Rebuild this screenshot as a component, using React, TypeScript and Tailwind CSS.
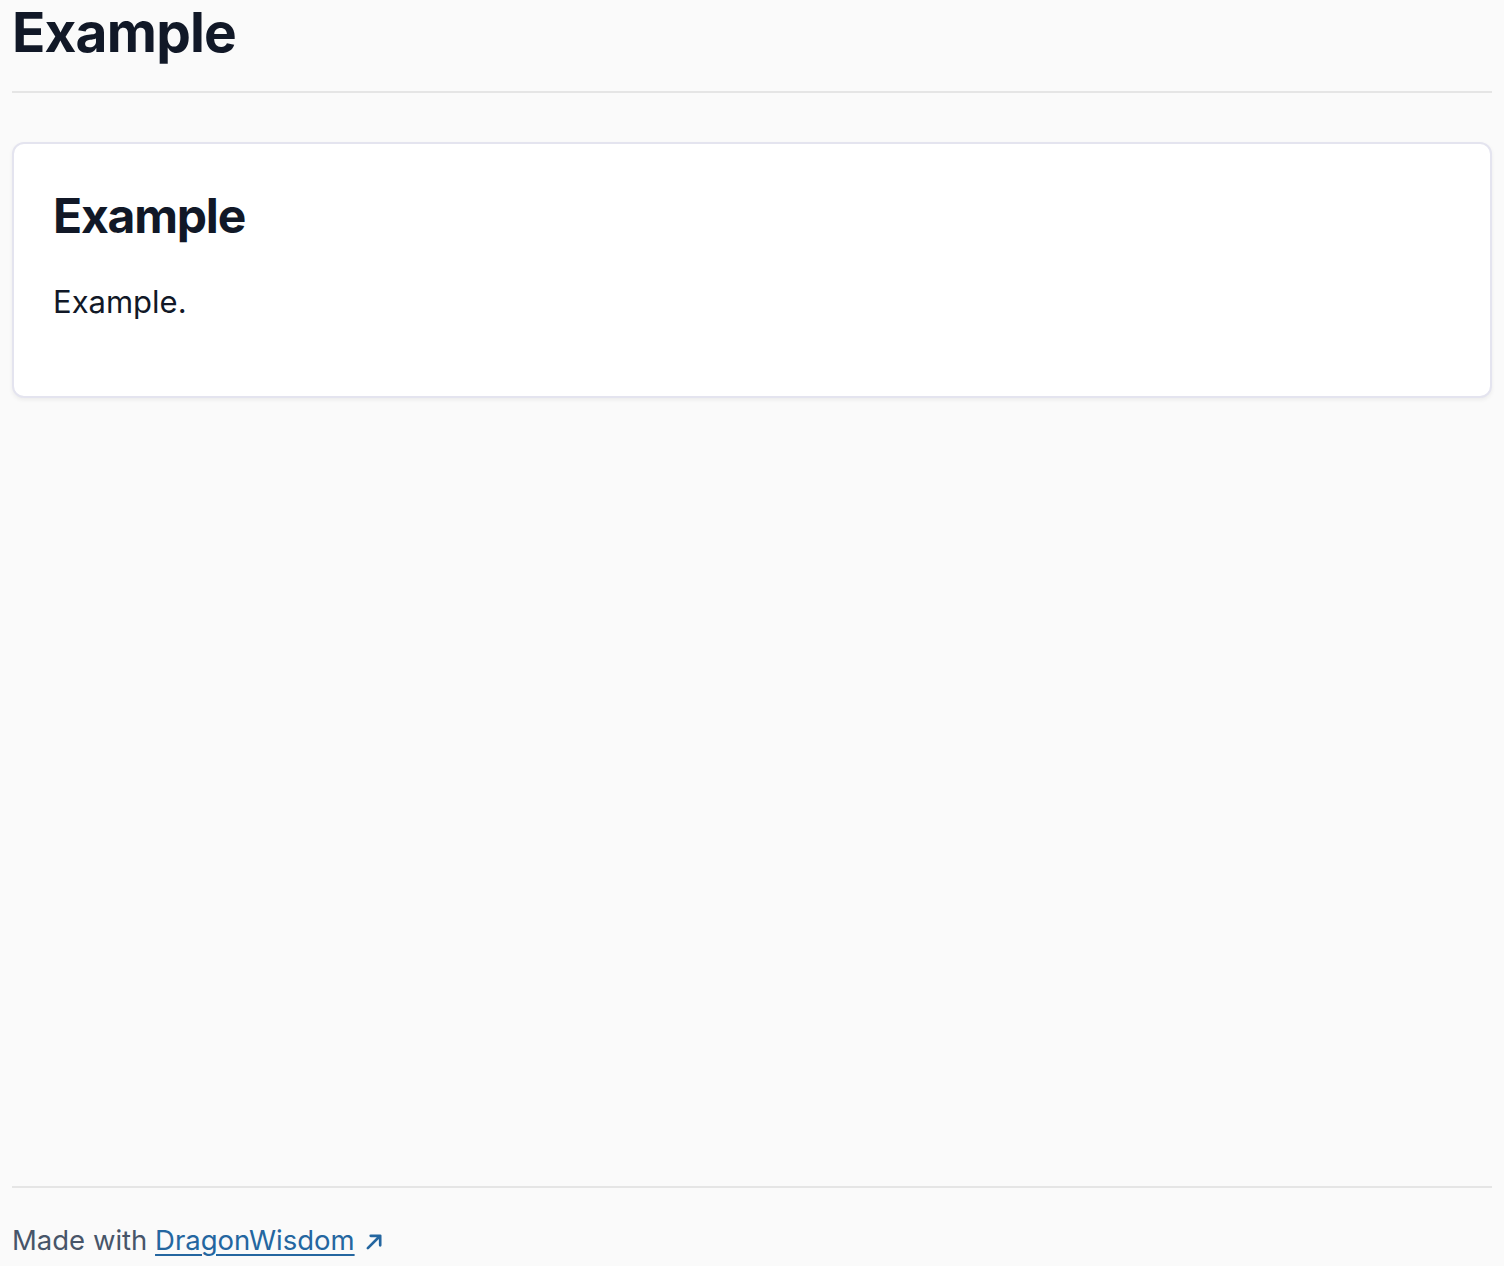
export default function App() {
  return (
    <div
      className="flex min-h-screen flex-col bg-[#fafafa] px-3 text-[#111827]"
      style={{ fontFamily: 'Inter, "Noto Sans", sans-serif' }}
    >
      <header className="border-b-2 border-[#e5e5e5] pb-[27px]">
        <h1 className="text-[55px] leading-[64px] font-bold tracking-[-0.8px]">Example</h1>
      </header>
      <main className="flex-1 pt-[49px]">
        <section className="rounded-xl border-2 border-[#e4e4ef] bg-white px-[39px] pt-[40px] pb-[73px] shadow-[0_2px_4px_rgba(0,0,0,0.06)]">
          <h2 className="text-[48px] leading-[64px] font-bold tracking-[-1.2px]">Example</h2>
          <p className="mt-[33px] text-[31px] leading-[42px]">Example.</p>
        </section>
      </main>
      <footer className="border-t-2 border-[#e5e5e5] pt-[32px] pb-[6px] text-[27.5px] leading-[40px] text-[#475569]">
        Made with{' '}
        <a href="#" className="text-[#2466a0] underline decoration-2 underline-offset-[4px]">
          DragonWisdom
        </a>
        <svg className="ml-[10px] inline-block align-[-1px]" width="19" height="19" viewBox="0 0 20 20" fill="none" stroke="#2466a0" strokeWidth="2.8" strokeLinecap="round" strokeLinejoin="round">
          <path d="M3 17L16 4M6 4h10v10" />
        </svg>
      </footer>
    </div>
  )
}
